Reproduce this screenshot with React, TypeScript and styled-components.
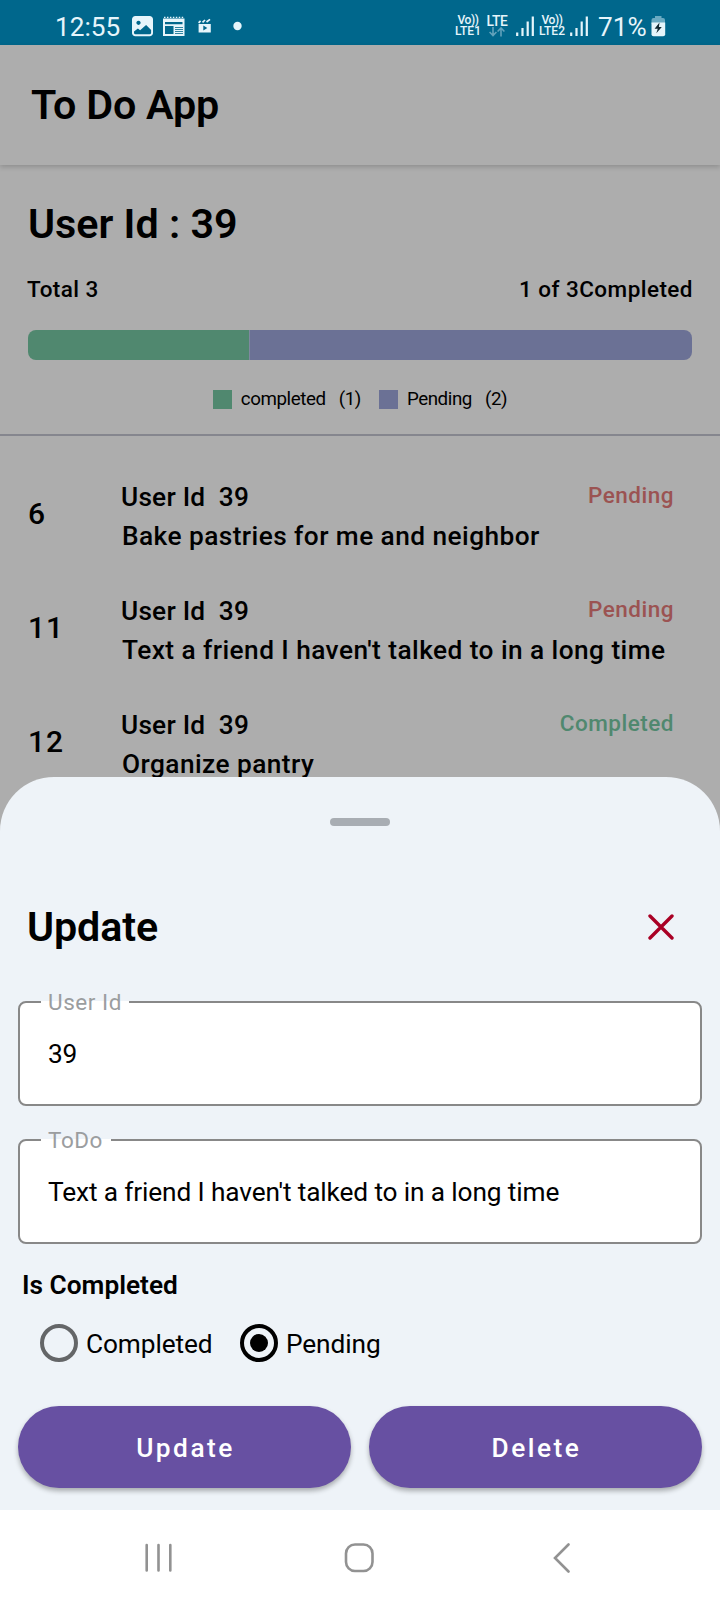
import React from 'react';
import styled, { createGlobalStyle } from 'styled-components';

const GlobalStyle = createGlobalStyle`
  *, *::before, *::after { box-sizing: border-box; }
  body {
    margin: 0;
    background: #fff;
    font-family: Roboto, 'Liberation Sans', sans-serif;
    color: #000;
  }
  h1, h2, h3, p, ul { margin: 0; padding: 0; }
  button { font-family: inherit; }
`;

const Phone = styled.div`
  position: relative;
  display: flex;
  flex-direction: column;
  width: 720px;
  height: 1600px;
  overflow: hidden;
  background: #adadad;
`;

/* ---------- status bar ---------- */

const StatusBar = styled.div`
  display: flex;
  justify-content: space-between;
  flex: none;
  height: 45px;
  padding: 0 54px 0 55px;
  background: #00678c;
  color: #e6f5fb;
`;

const StatusGroup = styled.div`
  display: flex;
  align-items: flex-start;
  padding-top: 12px;
`;

const StatusText = styled.span<{ $width: number; $gap?: number }>`
  width: ${(p) => p.$width}px;
  margin-left: ${(p) => p.$gap ?? 0}px;
  font-size: 26.2px;
  line-height: 30px;
  white-space: nowrap;
`;

const StatusIcon = styled.svg<{ $gap?: number }>`
  display: block;
  flex: none;
  margin-left: ${(p) => p.$gap ?? 0}px;
`;

const Network = styled.div<{ $width: number; $gap?: number }>`
  display: flex;
  flex-direction: column;
  align-items: center;
  width: ${(p) => p.$width}px;
  margin-left: ${(p) => p.$gap ?? 0}px;
  padding-top: 3px;
  font-size: 12px;
  font-weight: 500;
  line-height: 11px;
  white-space: nowrap;
`;

const NetworkBig = styled.span`
  font-size: 13.8px;
  letter-spacing: -0.4px;
  line-height: 12px;
`;

const VoiceMark = styled.span`
  font-size: 12px;
  letter-spacing: -0.4px;
`;

const ImageIcon = () => (
  <StatusIcon $gap={11} width="22" height="26" viewBox="0 0 22 26">
    <path
      fillRule="evenodd"
      fill="currentColor"
      d="M3.5 4h14A3.3 3.3 0 0 1 21 7.4v13.4a3.3 3.3 0 0 1-3.5 3.5h-14A3.3 3.3 0 0 1 0 20.8V7.4A3.3 3.3 0 0 1 3.5 4ZM6.5 8.700a2.1 2.1 0 1 0 .01 0ZM2 19.500v1.200q0 1.500 1.500 1.500h14q1.600 0 1.600-1.500v-2.700l-5-5-6 5.300-2.200-1.900Z"
    />
  </StatusIcon>
);

const NewsIcon = () => (
  <StatusIcon $gap={9} width="22" height="26" viewBox="0 0 22 26">
    <path stroke="currentColor" strokeWidth="1.3" strokeDasharray="1.5 1.45" d="M1 5.300h20" fill="none" />
    <path
      fillRule="evenodd"
      fill="currentColor"
      d="M0 6.500h21.500v17.500H0ZM2 10v2.200h17.500V10ZM2 14v8h8.500v-8Z"
    />
    <path stroke="#00678c" strokeWidth="0.8" d="M12 15.500h8M12 17.500h8M12 19.500h8M12 21.500h8" />
  </StatusIcon>
);

const ClapperIcon = () => (
  <StatusIcon $gap={13} width="14" height="26" viewBox="0 0 14 26">
    <path
      fillRule="evenodd"
      fill="currentColor"
      d="M.6 12h12.200v8.400H.6ZM5.300 13.600v5l4-2.500Z"
    />
    <path stroke="currentColor" strokeWidth="1.7" d="M.6 10.800 2.600 8.800M4.500 10.400 7 8M8.500 10 12 7.300" fill="none" />
  </StatusIcon>
);

const DotIcon = () => (
  <StatusIcon $gap={21} width="9" height="26" viewBox="0 0 9 26">
    <circle cx="4.5" cy="14" r="4.2" fill="currentColor" />
  </StatusIcon>
);

const ArrowsIcon = () => (
  <svg width="16" height="10" viewBox="0 0 16 10">
    <path
      stroke="#62a2bb"
      strokeWidth="1.6"
      fill="none"
      d="M4 0v8.500M.6 5l3.400 3.500L7.400 5M12 9.500V1M8.600 4.500 12 1l3.400 3.500"
    />
  </svg>
);

const SignalIcon = ({ gap }: { gap: number }) => (
  <StatusIcon $gap={gap} width="18" height="26" viewBox="0 0 18 26">
    <path stroke="currentColor" strokeWidth="2.2" d="M1.200 24v-3.500M6.500 24v-8M11.700 24V9.500M16.800 24V4.500" />
  </StatusIcon>
);

const BatteryIcon = () => (
  <StatusIcon $gap={2} width="15" height="26" viewBox="0 0 15 26">
    <path fill="#6aaac2" d="M4 4h6.500v2H12q2 0 2 2v4H.5V8q0-2 2-2H4Z" />
    <path fill="currentColor" d="M.5 10.500h13.700v11.800q0 2-2 2H2.500q-2 0-2-2Z" />
    <path fill="#10262f" d="M8.500 10.500 3.600 16.800h3.200l-1.500 4.500 5.500-6.300H7.900Z" />
  </StatusIcon>
);

const VoLte = ({ line, width, gap }: { line: number; width: number; gap?: number }) => (
  <Network $width={width} $gap={gap}>
    <VoiceMark>Vo))</VoiceMark>
    <span>LTE{line}</span>
  </Network>
);

/* ---------- page behind the sheet ---------- */

const AppBar = styled.header`
  display: flex;
  align-items: center;
  flex: none;
  height: 120px;
  padding-left: 31px;
  box-shadow: 0 2px 5px rgba(0, 0, 0, 0.18);
`;

const AppTitle = styled.h1`
  font-size: 41.25px;
  font-weight: 600;
  line-height: 48px;
  letter-spacing: -0.2px;
`;

const Summary = styled.section`
  display: flex;
  flex-direction: column;
  flex: none;
  height: 271px;
  padding: 35px 28px 0;
  border-bottom: 2px solid #85868e;
`;

const UserHeading = styled.h2`
  font-size: 41.25px;
  font-weight: 600;
  line-height: 48px;
`;

const Totals = styled.div`
  display: flex;
  justify-content: space-between;
  margin: 27px -1px 27px;
  font-size: 22.5px;
  font-weight: 500;
  line-height: 28px;
  letter-spacing: 0.45px;
`;

const Bar = styled.div`
  display: flex;
  flex: none;
  height: 30px;
  border-radius: 8px;
  overflow: hidden;
`;

const BarPart = styled.div<{ $share: number; $color: string }>`
  flex: ${(p) => p.$share} 1 0;
  background: ${(p) => p.$color};
  & + & { border-left: 1px solid #8088a0; }
`;

const Legend = styled.div`
  display: flex;
  justify-content: center;
  gap: 18px;
  margin-top: 30px;
  font-size: 18.75px;
  line-height: 19px;
  letter-spacing: -0.42px;
`;

const LegendItem = styled.div`
  display: flex;
  white-space: pre;
`;

const Swatch = styled.span<{ $color: string }>`
  width: 19px;
  height: 19px;
  margin-right: 9px;
  background: ${(p) => p.$color};
`;

const LegendCount = styled.span`
  margin-left: 13px;
`;

const TodoList = styled.ul`
  display: flex;
  flex-direction: column;
  gap: 36px;
  padding: 42px 46px 0 28px;
  list-style: none;
`;

const TodoRow = styled.li`
  display: flex;
  height: 78px;
  font-weight: 500;
`;

const TodoNumber = styled.span`
  width: 93px;
  padding-top: 18px;
  font-size: 30px;
  line-height: 36px;
  letter-spacing: 0.9px;
`;

const TodoBody = styled.div`
  flex: 1;
  min-width: 0;
`;

const TodoTop = styled.div`
  display: flex;
  justify-content: space-between;
`;

const TodoUser = styled.p`
  font-size: 26.25px;
  line-height: 39px;
  letter-spacing: 0.22px;
  white-space: pre;
`;

const TodoText = styled.p`
  padding-left: 1px;
  font-size: 26.25px;
  line-height: 39px;
  letter-spacing: 0.44px;
  white-space: nowrap;
`;

const TodoStatus = styled.span<{ $done: boolean }>`
  margin-top: 3px;
  font-size: 22.5px;
  line-height: 28px;
  letter-spacing: 0.5px;
  color: ${(p) => (p.$done ? '#50886f' : '#9b5352')};
`;

/* ---------- bottom sheet ---------- */

const Sheet = styled.section`
  position: absolute;
  left: 0;
  right: 0;
  bottom: 90px;
  height: 733px;
  padding: 41px 18px 0;
  border-radius: 54px 54px 0 0;
  background: #eef3f8;
`;

const Handle = styled.div`
  width: 60px;
  height: 8px;
  margin: 0 auto;
  border-radius: 4px;
  background: #a8adb3;
`;

const SheetHeader = styled.div`
  display: flex;
  align-items: center;
  justify-content: space-between;
  height: 48px;
  margin: 77px 28px 50px 9px;
`;

const SheetTitle = styled.h2`
  font-size: 41.25px;
  font-weight: 600;
  line-height: 48px;
  letter-spacing: -0.1px;
`;

const CloseButton = styled.button`
  display: flex;
  padding: 0 0 1px;
  border: 0;
  background: none;
`;

const Field = styled.div`
  position: relative;
  display: flex;
  align-items: center;
  height: 105px;
  margin-bottom: 33px;
  padding: 0 28px;
  border: 2px solid #888;
  border-radius: 8px;
  background: #fff;
`;

const FieldLabel = styled.label<{ $width: number }>`
  position: absolute;
  top: -15px;
  left: 21px;
  width: ${(p) => p.$width}px;
  padding-left: 7px;
  font-size: 22.5px;
  line-height: 28px;
  letter-spacing: 0.55px;
  white-space: nowrap;
  color: #9b9d9f;
  background: linear-gradient(transparent 13px, #fff 13px);
`;

const FieldValue = styled.span`
  font-size: 26.25px;
  line-height: 32px;
  letter-spacing: -0.13px;
`;

const GroupTitle = styled.h3`
  margin: -10px 0 0 4px;
  font-size: 26.25px;
  font-weight: 600;
  line-height: 36px;
`;

const RadioGroup = styled.div`
  display: flex;
  margin: 20px 0 43px 22px;
`;

const RadioOption = styled.label<{ $width: number }>`
  display: flex;
  align-items: center;
  width: ${(p) => p.$width}px;
  font-size: 26.25px;
  line-height: 38px;
  letter-spacing: -0.1px;
  white-space: nowrap;
`;

const RadioMark = styled.span<{ $checked: boolean }>`
  display: flex;
  align-items: center;
  justify-content: center;
  width: 38px;
  height: 38px;
  margin-right: 8px;
  border: 4px solid ${(p) => (p.$checked ? '#000' : '#646668')};
  border-radius: 50%;
  &::after {
    content: '';
    width: 18px;
    height: 18px;
    border-radius: 50%;
    background: ${(p) => (p.$checked ? '#000' : 'transparent')};
  }
`;

const RadioText = styled.span`
  padding-top: 2px;
`;

const Actions = styled.div`
  display: grid;
  grid-template-columns: 1fr 1fr;
  gap: 18px;
`;

const ActionButton = styled.button`
  height: 82px;
  border: 0;
  padding: 2px 0 0 2px;
  border-radius: 41px;
  background: #6750a2;
  box-shadow: 0 3px 5px rgba(0, 0, 0, 0.3);
  color: #fff;
  font-size: 26.25px;
  font-weight: 500;
  letter-spacing: 2.5px;
`;

/* ---------- navigation bar ---------- */

const NavBar = styled.nav`
  position: absolute;
  left: 0;
  right: 0;
  bottom: 0;
  display: flex;
  align-items: center;
  height: 90px;
  padding: 5px 0 0 143px;
  background: #fff;
`;

const NavIcon = styled.svg<{ $gap?: number }>`
  display: block;
  margin-left: ${(p) => p.$gap ?? 0}px;
  fill: none;
  stroke: #929292;
  stroke-width: 2.6;
  stroke-linecap: round;
`;

const GREEN = '#50886f';
const PURPLE = '#6b7195';

const legend = [
  { label: 'completed', count: 1, color: GREEN },
  { label: 'Pending', count: 2, color: PURPLE },
];

const todos = [
  { id: 6, text: 'Bake pastries for me and neighbor', done: false },
  { id: 11, text: "Text a friend I haven't talked to in a long time", done: false },
  { id: 12, text: 'Organize pantry', done: true },
];

export default function App() {
  return (
    <Phone>
      <GlobalStyle />
      <StatusBar>
        <StatusGroup>
          <StatusText $width={66}>12:55</StatusText>
          <ImageIcon />
          <NewsIcon />
          <ClapperIcon />
          <DotIcon />
        </StatusGroup>
        <StatusGroup>
          <VoLte line={1} width={26} />
          <Network $width={24} $gap={4}>
            <NetworkBig>LTE</NetworkBig>
            <ArrowsIcon />
          </Network>
          <SignalIcon gap={7} />
          <VoLte line={2} width={28} gap={4} />
          <SignalIcon gap={4} />
          <StatusText $width={51} $gap={10}>71%</StatusText>
          <BatteryIcon />
        </StatusGroup>
      </StatusBar>

      <AppBar>
        <AppTitle>To Do App</AppTitle>
      </AppBar>

      <Summary>
        <UserHeading>User Id : 39</UserHeading>
        <Totals>
          <span>Total 3</span>
          <span>1 of 3Completed</span>
        </Totals>
        <Bar>
          {legend.map((l) => (
            <BarPart key={l.label} $share={l.count} $color={l.color} />
          ))}
        </Bar>
        <Legend>
          {legend.map((l) => (
            <LegendItem key={l.label}>
              <Swatch $color={l.color} />
              {l.label}
              <LegendCount>({l.count})</LegendCount>
            </LegendItem>
          ))}
        </Legend>
      </Summary>

      <TodoList>
        {todos.map((t) => (
          <TodoRow key={t.id}>
            <TodoNumber>{t.id}</TodoNumber>
            <TodoBody>
              <TodoTop>
                <TodoUser>{'User Id  39'}</TodoUser>
                <TodoStatus $done={t.done}>{t.done ? 'Completed' : 'Pending'}</TodoStatus>
              </TodoTop>
              <TodoText>{t.text}</TodoText>
            </TodoBody>
          </TodoRow>
        ))}
      </TodoList>

      <Sheet>
        <Handle />
        <SheetHeader>
          <SheetTitle>Update</SheetTitle>
          <CloseButton aria-label="Close">
            <svg width="26" height="26" viewBox="0 0 26 26">
              <path d="M2 2l22 22M24 2 2 24" stroke="#a90025" strokeWidth="3.4" strokeLinecap="round" />
            </svg>
          </CloseButton>
        </SheetHeader>
        <Field>
          <FieldLabel $width={88}>User Id</FieldLabel>
          <FieldValue>39</FieldValue>
        </Field>
        <Field>
          <FieldLabel $width={70}>ToDo</FieldLabel>
          <FieldValue>Text a friend I haven't talked to in a long time</FieldValue>
        </Field>
        <GroupTitle>Is Completed</GroupTitle>
        <RadioGroup>
          <RadioOption $width={200}>
            <RadioMark $checked={false} />
            <RadioText>Completed</RadioText>
          </RadioOption>
          <RadioOption $width={150}>
            <RadioMark $checked />
            <RadioText>Pending</RadioText>
          </RadioOption>
        </RadioGroup>
        <Actions>
          <ActionButton>Update</ActionButton>
          <ActionButton>Delete</ActionButton>
        </Actions>
      </Sheet>

      <NavBar>
        <NavIcon width="30" height="30" viewBox="0 0 30 30">
          <path d="M3.700 2v25.500M15.500 2v25.500M27.300 2v25.500" />
        </NavIcon>
        <NavIcon $gap={171} width="30" height="30" viewBox="0 0 30 30">
          <rect x="2" y="1.5" width="26.5" height="26.5" rx="9" />
        </NavIcon>
        <NavIcon $gap={178} width="20" height="30" viewBox="0 0 20 30">
          <path d="M16.500 1.500 3 15l13.500 13.500" />
        </NavIcon>
      </NavBar>
    </Phone>
  );
}
